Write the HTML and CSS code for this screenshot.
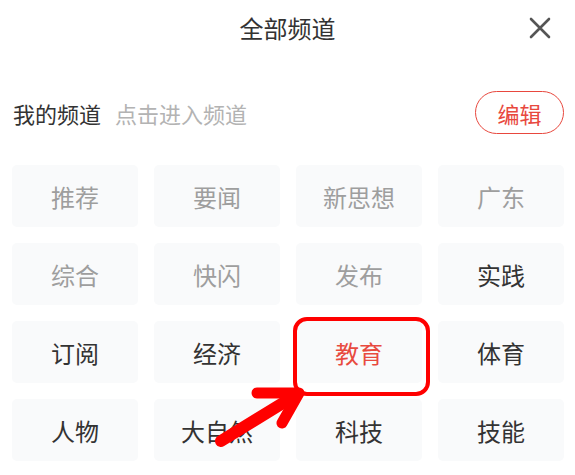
FILE: index.html
```html
<!DOCTYPE html>
<html>
<head>
    <title>全部频道</title>
    <link rel="stylesheet" href="styles.css">
</head>
<body>
    <div class="page">
        <div class="header">
            <span></span>
            <h2 class="title">全部频道</h2>
            <button class="close" aria-label="关闭">
                <svg width="24" height="24" viewBox="0 0 24 24">
                    <path d="M3 3 L21 21 M21 3 L3 21" stroke="#555" stroke-width="2.6" stroke-linecap="round" fill="none"/>
                </svg>
            </button>
        </div>

        <div class="mine">
            <span class="mine-label">我的频道</span>
            <span class="mine-hint">点击进入频道</span>
            <button class="edit">编辑</button>
        </div>

        <div class="channels">
            <div class="tile fixed">推荐</div>
            <div class="tile fixed">要闻</div>
            <div class="tile fixed">新思想</div>
            <div class="tile fixed">广东</div>
            <div class="tile fixed">综合</div>
            <div class="tile fixed">快闪</div>
            <div class="tile fixed">发布</div>
            <div class="tile">实践</div>
            <div class="tile">订阅</div>
            <div class="tile">经济</div>
            <div class="tile active">教育</div>
            <div class="tile">体育</div>
            <div class="tile">人物</div>
            <div class="tile">大自然</div>
            <div class="tile">科技</div>
            <div class="tile">技能</div>
        </div>

        <!-- annotation drawn over the screenshot -->
        <svg class="marks" width="575" height="475" viewBox="0 0 575 475">
            <rect x="295" y="319" width="133" height="75" rx="12" ry="12" fill="none" stroke="#ff0000" stroke-width="4"/>
            <path d="M221 441 L296 395" stroke="#ff0000" stroke-width="12" stroke-linecap="round" fill="none"/>
            <path d="M257 393 L299 393 L282 423" stroke="#ff0000" stroke-width="11" stroke-linecap="round" stroke-linejoin="round" fill="none"/>
        </svg>
    </div>
</body>
</html>
```

FILE: styles.css
```css
body { margin: 0; background: #fff; font-family: "Noto Sans CJK SC", "Noto Sans", sans-serif; }
.page { position: relative; width: 575px; height: 475px; overflow: hidden; }

.header { display: grid; grid-template-columns: 1fr auto 1fr; align-items: center; height: 56px; }
.title { margin: 0; font-size: 24px; font-weight: normal; color: #333; line-height: 56px; }
.close { justify-self: end; margin-right: 23px; padding: 0; border: none; background: none; width: 24px; height: 24px; }
.close svg { display: block; }

.mine { display: flex; align-items: center; height: 43px; margin-top: 35px; padding: 0 11px 0 13px; }
.mine-label { font-size: 22px; color: #333; }
.mine-hint { font-size: 22px; color: #b3b3b3; margin-left: 14px; }
.edit { margin-left: auto; width: 89px; height: 43px; border: 1.5px solid #e8483e; border-radius: 22px; background: #fff; color: #e8483e; font-family: inherit; font-size: 22px; padding: 0; }

.channels { display: grid; grid-template-columns: repeat(4, 126px); grid-auto-rows: 62px; gap: 16px; margin-top: 31px; padding: 0 11px 0 12px; }
.tile { display: flex; align-items: center; justify-content: center; background: #f9fafb; border-radius: 5px; font-size: 24px; color: #333; }
.tile.fixed { color: #9e9e9e; }
.tile.active { color: #e84a3f; }

.marks { position: absolute; left: 0; top: 0; pointer-events: none; }
```
